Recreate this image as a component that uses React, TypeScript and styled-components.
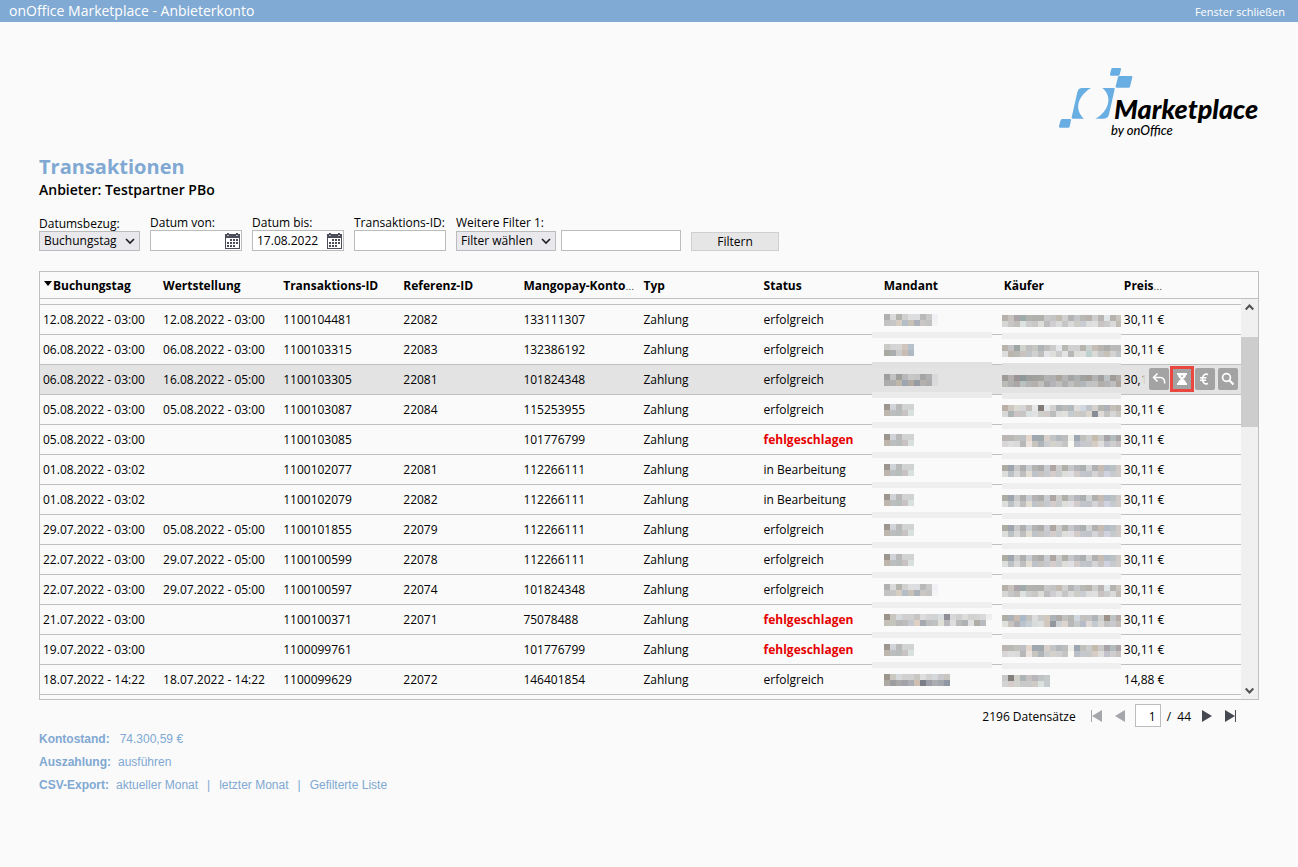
import React from 'react';
import styled, { createGlobalStyle, css } from 'styled-components';

const BLUE = '#80a8d2';
const LINE = '#c0c0c0';

const GlobalStyle = createGlobalStyle`
  *, *::before, *::after { box-sizing: border-box; }
  body {
    margin: 0;
    background: #fafafa;
    color: #000;
    font: 12px/16px "Open Sans", sans-serif;
  }
  button, input, select { font: inherit; color: inherit; margin: 0; border-radius: 0; }
`;

const TitleBar = styled.header`
  display: flex;
  align-items: center;
  justify-content: space-between;
  height: 22px;
  padding: 0 13px 0 9px;
  background: #80aad3;
  color: #fff;
  font-size: 14px;
  line-height: 20px;
`;

const CloseLink = styled.a`
  color: inherit;
  font-size: 11px;
  line-height: 20px;
  padding-top: 2px;
  text-decoration: none;
`;

const Main = styled.main`
  padding: 44px 39px 0;
`;

const LogoRow = styled.div`
  display: flex;
  justify-content: flex-end;
  height: 89px;
`;

const Logotype = styled.svg`
  margin-right: -1px;
`;

const Title = styled.h1`
  margin: 0;
  color: ${BLUE};
  font-size: 20px;
  line-height: 24px;
  font-weight: 700;
`;

const Subtitle = styled.h2`
  margin: 0 0 15px;
  font-size: 14px;
  line-height: 22px;
  font-weight: 600;
`;

const Filters = styled.form`
  display: flex;
  align-items: flex-end;
  gap: 10px;
`;

const Field = styled.div`
  display: flex;
  flex-direction: column;
`;

const FieldLabel = styled.label`
  line-height: 14px;
  white-space: nowrap;
`;

const FieldRow = styled.div`
  display: flex;
  align-items: flex-end;
  gap: 5px;
`;

const TextBox = styled.input<{ $width: number }>`
  width: ${(p) => p.$width}px;
  height: 21px;
  padding: 0 4px;
  border: 1px solid #bcbcbc;
  background: #fff;
  outline: none;
`;

const InputHolder = styled.div`
  position: relative;
  display: flex;
`;

const CalendarButton = styled.button`
  position: absolute;
  right: 2px;
  top: 3px;
  display: flex;
  padding: 0;
  border: 0;
  background: none;
`;

const SelectBox = styled.select<{ $width: number }>`
  appearance: none;
  display: block;
  width: ${(p) => p.$width}px;
  height: 20px;
  padding: 0 20px 0 4px;
  border: 1px solid #bcbcbc;
  background: #e9e9ed;
  line-height: 16px;
`;

const SelectArrow = styled.svg`
  position: absolute;
  right: 5px;
  top: 7px;
  pointer-events: none;
`;

const FilterButton = styled.button`
  width: 88px;
  height: 19px;
  padding: 0;
  border: 1px solid #cfcfcf;
  background: #e6e6e6;
  line-height: 16px;
`;

const Panel = styled.section`
  display: flex;
  margin-top: 20px;
  border: 1px solid ${LINE};
`;

const TableArea = styled.div`
  flex: 1;
  min-width: 0;
  padding-bottom: 4px;
`;

const Table = styled.table`
  width: 100%;
  table-layout: fixed;
  border-spacing: 0;
`;

const HeadCell = styled.th`
  height: 27px;
  padding: 2px 3px 0;
  border-bottom: 1px solid ${LINE};
  text-align: left;
  font-weight: 700;
  white-space: nowrap;
`;

const Dots = styled.span`
  font-weight: 300;
`;

const SortArrow = styled.svg`
  margin: 0 1px 4px 1px;
`;

const ClippedCell = styled.td`
  height: 6px;
  padding: 0;
  border-bottom: 1px solid ${LINE};
`;

const Row = styled.tr<{ $active?: boolean }>`
  background: ${(p) => (p.$active ? '#e3e3e3' : 'transparent')};
`;

const Cell = styled.td`
  position: relative;
  height: 30px;
  padding: 0 3px;
  border-bottom: 1px solid ${LINE};
  white-space: nowrap;
`;

const MaskedCell = styled(Cell)<{ $buyer?: boolean; $band?: string }>`
  padding: ${(p) => (p.$buyer ? '2px 0 0 1px' : '0 0 0 3px')};
  ${(p) => p.$band && css`
    &::after {
      content: '';
      position: absolute;
      left: ${p.$buyer ? 1 : -9}px;
      bottom: ${p.$buyer ? -5 : -4}px;
      width: ${p.$buyer ? 119 : 120}px;
      height: 6px;
      background: ${p.$band};
    }
  `}
`;

const Mosaic = styled.svg`
  display: block;
`;

const Failed = styled.strong`
  color: #e60000;
  font-weight: 700;
`;

const Actions = styled.div`
  position: absolute;
  top: 0;
  right: 0;
  display: flex;
  align-items: center;
  gap: 3px;
  height: 28px;
  padding: 0 3px 0 10px;
  background: linear-gradient(90deg, #e3e3e300, #e3e3e3 6px);
`;

const Action = styled.button<{ $marked?: boolean }>`
  display: flex;
  align-items: center;
  justify-content: center;
  width: 20px;
  height: 22px;
  padding: 0;
  border: 0;
  border-radius: 2px;
  background: #a3a3a3;
  ${(p) => p.$marked && css`
    border-radius: 0;
    box-shadow: 0 0 0 2px #eb4741, inset 0 0 0 1px #eb4741;
  `}
`;

const ScrollColumn = styled.div`
  display: flex;
  flex-direction: column;
  width: 17px;
`;

const ScrollHead = styled.div`
  height: 27px;
  border-bottom: 1px solid ${LINE};
`;

const ScrollTrack = styled.div`
  display: flex;
  flex: 1;
  flex-direction: column;
  background: #f0f0f0;
`;

const ScrollButton = styled.button`
  display: flex;
  align-items: center;
  justify-content: center;
  height: 17px;
  padding: 0;
  border: 0;
  background: none;
`;

const ScrollLane = styled.div`
  flex: 1;
  padding-top: 21px;
`;

const ScrollThumb = styled.div`
  height: 90px;
  background: #cdcdcd;
`;

const Pager = styled.nav`
  display: flex;
  align-items: center;
  justify-content: flex-end;
  height: 23px;
  margin-top: 4px;
  padding-right: 23px;
`;

const PagerCount = styled.span`
  margin: 2px 15px 0 0;
`;

const PagerButton = styled.button<{ $gap?: number }>`
  display: flex;
  padding: 0;
  border: 0;
  background: none;
  margin-right: ${(p) => p.$gap ?? 0}px;
`;

const PageBox = styled.input`
  width: 26px;
  height: 23px;
  margin-right: 6px;
  padding: 2px 4px 0;
  border: 1px solid #bcbcbc;
  background: #fff;
  text-align: right;
`;

const PagerTotal = styled.span`
  margin: 2px 11px 0 0;
`;

const Summary = styled.dl`
  margin: 1px 0 0;
  color: ${BLUE};
  font: 12px/23px "Liberation Sans", Arial, sans-serif;
`;

const SummaryRow = styled.div<{ $wide?: boolean }>`
  display: flex;
  gap: ${(p) => (p.$wide ? 10 : 7)}px;
  dt { font-weight: 700; }
  dd { display: flex; gap: 9px; margin: 0; }
`;

const SummaryLink = styled.a`
  color: inherit;
  text-decoration: none;
`;

const MANDANT: Record<string, string[]> = {
  a: [
    'b1b1b1 dadada b5b5b0 d0d0d0 dedede dbdde0 b9b9b9 c9c9c9 f1f1f5',
    'c3c3c3 c6c6c6 d6cec2 b4bec9 c8c1b7 acb1b9 cac6c4 c3c3c3 f4f4f7',
  ],
  b: ['cacac6 d4d4d4 d6d6d6 d0c6bd b5c2ce', 'a9a9a4 aaaeae cccccc c8bcb3 b0b9c1'],
  hover: [
    '9e9e9e c2c2c2 9fa09b b8b8b8 c7c7c7 c4c4c4 a4a4a4 b0b0b0 d9d9dc',
    'acacac aeaeae c0b7ab 9da6b0 b1aaa2 969ba3 b4b0ae acacac dadadd',
  ],
  c: ['9d968f d0d3d7 b9b9b9 d1d3d3 d1d2d2', 'beb6ad bcbfbf b7bcbd c9c2c2 d9e1df'],
  d: [
    '9c948a c7c7bf d6dadd d0cecf d0d0d0 c8c4c1 dcdcdc d4d4d4 d0d4d5 dadde0 8e8f96 d7d7d7 cfcfcf dcdcd8 d1d1d1 d3d3d3 d9d9d9 eeeeee',
    'c5c1b9 c5c5c0 b9b9b9 bdbdbe c5c9cf dfd0c5 a5aab0 bdbdbd c0c1c2 dfe0d7 b9b9bd dddddf bababa afb2b4 e0e0e0 b0aca6 b9bbc0 fafafa',
  ],
  e: [
    '9d968c c9c9c1 d6dadc d2d0d0 d1d1d1 cac7c3 dedede d2d2d2 d4d8da c8c8cd c8c4bf',
    'afa9a3 9c9da0 a8a8a8 a1a3a8 abafb3 cfbfb3 7c7e87 9c9fa7 abadb0 a4a6ad 9097a3',
  ],
};

const BUYER: Record<string, string[]> = {
  a: [
    'b6b2ab c8c2be aba4a8 9fabaa b2b2ae b0b0ae b0b1ad c9c9c9 c4c4c4 c1bbb2 d0d0d0 b4b4b4 c4c6c9 b8b8b4 b7b2ac cecece b8b4b4 e0e5e7 b6b2ad cbc5bf',
    'd7d7d5 c7c7c7 c2bebc dbe2e0 cdcdcd cac8c7 dcdcd9 bdbdbd d0ced2 dbdbdb c6c6c4 dadada cdcdc8 c9ccd3 dcdedd e0e0e0 c9c4c3 cbcbcb dadada c2bcb4',
  ],
  b: [
    'b8b4ab c2c2c2 9fa4a4 d0d2cc bfbfbf c6c6c2 adb3b7 bebebe cccccc e5e6ea b8b8b4 d0d0d0 d0d0d0 b7b3ae cbd0d1 c6bdb6 b8b4af adadad babab8 b9b9b9',
    'dedede bbb5ae b9b9b5 c9c3bf c2c5c7 d1d1d1 bebebe e4e4e8 dededa cccccc e4e4e4 b7b7b7 ddddd9 e0e0df bfd0d1 dadbd7 c7c7c7 c7c1ba d3d3d3 c1c5c8',
  ],
  hover: [
    '9f9b96 b4afac 9a9397 8d9999 9e9e9c a0a09c a2a29e b3b3b3 b0b0b0 aaa49c b5b5b5 a3a3a3 adb0b3 a1a19e a19c97 b2b2b2 a19e9f bcc2c4 a09c98 b2ada8',
    'bbbbb8 b0b0b0 aca7a6 bac1c1 b4b4b4 b4b0af c0c0bd a8a8a8 b6b4b9 bfbfbf aeaeac c0c0c0 b3b3af b1b5bc c0c3c2 c3c3c3 b2aeac b3b3b3 bebebe aca69f',
  ],
  c: [
    'b9b1a8 cec7c1 d8dad3 d5d5d5 c4bebd e7e7ea 837b7a e5e8e9 d2d0d0 afb2b5 bababa b4b9be dcdcda d0d7df c0c3c8 d7d1cb b5b5b1 aeb2b6 c5bfba bdb7b1',
    'd8d8d7 aeb3b5 ccc3c5 c7c6c5 d9e1e2 e1e1e1 cececb d0cbc9 bbbcbe dddddd e1e1de c3ccd1 cecac4 c8c8c8 ddd6cc 868d98 dedbd9 c3c3c2 d7d7d7 cbc7c1',
  ],
  d: [
    'bbb6b4 bab7b7 c0c0bd bcc0c4 e4d6ca 9fa8b0 a0a8ac dad0ca c3c4c6 b3b8be bdbdbd eeeeea 9da7b2 c0c0bd cccccc c5bcae c9cac8 a8a3a7 b2bcbd aaa3a5',
    'd8d6d7 dddddd dadada b8b8b8 ece3de c7c5bd b0b5bc cacccd d3d3cc d0d0d0 c5c5c5 fafaf2 bbbfc8 c5c9cd c8c8c8 d7cdc4 dededd c2c3ca cecece c7c1c1',
  ],
  e: [
    'aeada4 9fa5ac c9c9c9 aeaeae cacdd2 b5b3b2 ababac c9ccd0 ada6a3 cdcdcd b0afa8 c6c7ca b4b6bc acafb0 d1d3d5 b1b1b1 c6bcb3 b4bdc5 bac1c3 cfc9c8',
    'dddfdc bbc1c5 d8d8d8 bfbfbf e2ded3 bec3c9 c7c3c0 c6cace d4cdcc c8cccc dededa e0e0e4 d2cbc9 c3c5cd c0c4c8 d5d5d8 c9c4c4 d0d3df c6cace d1ccca',
  ],
  f: [
    'afafa8 acb1b8 c8bcb0 aabaca c2c2c0 dcdcdc cacaca d2c8bb adb3b8 adaaa7 c3c1bf b6b6b2 cfd8df c4c2bf c3c3c3 b0b4b9 cecece 9c928a bec4c6 b5aaa6',
    'dfe1dc cac3bf b0b0b5 b9c4cf c9ced3 d8dcdc dddede d0c8bc 91979c cdd0d3 ddd5ce b8b8b8 c6c9ca b5bcc8 e0dad7 c3cbd2 d9d7d4 c3c3c1 c9c9cf c4beb8',
  ],
  g: [
    'c8c8c8 817e7c ced0c8 aeb3b5 c7c2c2 b8b6ba bfc3c4 c4c9ca',
    'd3d3d3 d3ccca d0d3cf c9c9c9 cac9c9 cfcac6 dbe1de c8cbce',
  ],
};

function Pixels({ rows, width }: { rows: string[]; width?: number }) {
  const grid = rows.map((r) => r.split(' '));
  const w = width ?? grid[0].length * 6;
  return (
    <Mosaic width={w} height={12} shapeRendering="crispEdges" aria-hidden="true">
      {grid.map((line, y) =>
        line.map((c, x) => <rect key={`${x}-${y}`} x={x * 6} y={y * 6} width={6} height={6} fill={`#${c}`} />),
      )}
    </Mosaic>
  );
}

type Entry = {
  booked: string;
  valued: string;
  id: string;
  ref: string;
  account: string;
  status: string;
  mandant: string;
  buyer: string;
  price: string;
};

const entry = (
  booked: string, valued: string, id: string, ref: string, account: string,
  status: string, mandant: string, buyer: string, price = '30,11 €',
): Entry => ({ booked, valued, id, ref, account, status, mandant, buyer, price });

const ENTRIES: Entry[] = [
  entry('12.08.2022 - 03:00', '12.08.2022 - 03:00', '1100104481', '22082', '133111307', 'erfolgreich', 'a', 'a'),
  entry('06.08.2022 - 03:00', '06.08.2022 - 03:00', '1100103315', '22083', '132386192', 'erfolgreich', 'b', 'b'),
  entry('06.08.2022 - 03:00', '16.08.2022 - 05:00', '1100103305', '22081', '101824348', 'erfolgreich', 'hover', 'hover'),
  entry('05.08.2022 - 03:00', '05.08.2022 - 03:00', '1100103087', '22084', '115253955', 'erfolgreich', 'c', 'c'),
  entry('05.08.2022 - 03:00', '', '1100103085', '', '101776799', 'fehlgeschlagen', 'c', 'd'),
  entry('01.08.2022 - 03:02', '', '1100102077', '22081', '112266111', 'in Bearbeitung', 'c', 'e'),
  entry('01.08.2022 - 03:02', '', '1100102079', '22082', '112266111', 'in Bearbeitung', 'c', 'e'),
  entry('29.07.2022 - 03:00', '05.08.2022 - 05:00', '1100101855', '22079', '112266111', 'erfolgreich', 'c', 'e'),
  entry('22.07.2022 - 03:00', '29.07.2022 - 05:00', '1100100599', '22078', '112266111', 'erfolgreich', 'c', 'e'),
  entry('22.07.2022 - 03:00', '29.07.2022 - 05:00', '1100100597', '22074', '101824348', 'erfolgreich', 'a', 'a'),
  entry('21.07.2022 - 03:00', '', '1100100371', '22071', '75078488', 'fehlgeschlagen', 'd', 'f'),
  entry('19.07.2022 - 03:00', '', '1100099761', '', '101776799', 'fehlgeschlagen', 'c', 'd'),
  entry('18.07.2022 - 14:22', '18.07.2022 - 14:22', '1100099629', '22072', '146401854', 'erfolgreich', 'e', 'g', '14,88 €'),
];

const ACTIVE = 2;

const COLUMNS: { label: string; shortened?: boolean }[] = [
  { label: 'Buchungstag' },
  { label: 'Wertstellung' },
  { label: 'Transaktions-ID' },
  { label: 'Referenz-ID' },
  { label: 'Mangopay-Konto', shortened: true },
  { label: 'Typ' },
  { label: 'Status' },
  { label: 'Mandant' },
  { label: 'Käufer' },
  { label: 'Preis', shortened: true },
];

function bandFor(index: number) {
  if (index === ENTRIES.length - 1) return undefined;
  if (index === ACTIVE - 1) return '#e1e1e1';
  if (index === ACTIVE) return '#ebebeb';
  return '#efefef';
}

function Logo() {
  return (
    <Logotype width="203" height="73" viewBox="0 0 203 73" role="img" aria-label="Marketplace by onOffice">
      <g fill="#69aee2" transform="translate(-17 -66) scale(.33333)">
        <path d="M218 204h22q4 0 3 4l-4 16q-1 3-4 3h-22q-4 0-3-4l4-16q1-3 4-3Z" />
        <path d="M238 228h36q4 0 3 4l-7 28q-1 3-4 3h-36q-4 0-3-4l7-28q1-3 4-3Z" />
        <path d="M67 357h23q4 0 3 4l-4 19q-1 3-4 3H60q-4 0-3-4l5-19q1-3 5-3Z" />
        <path d="M126 264h27C119 284 98 324 132 356H98q-4 0-3-4l17-75q3-13 14-13Z" />
        <path d="M187 264h34q4 0 3 4l-17 75q-3 13-15 13h-26C204 337 221 291 187 264Z" />
      </g>
      <text x="57" y="53" fontFamily="Lato, sans-serif" fontSize="27" fontWeight="900" fontStyle="italic">Marketplace</text>
      <text x="54" y="69" fontFamily="Lato, sans-serif" fontSize="13" fontWeight="500" fontStyle="italic">by onOffice</text>
    </Logotype>
  );
}

function CalendarIcon() {
  const dots = [[6, 7], [9, 7], [12, 7], [3, 10], [6, 10], [9, 10], [12, 10], [3, 13], [6, 13], [9, 13]];
  return (
    <svg width="15" height="16" viewBox="0 0 15 16" shapeRendering="crispEdges" aria-hidden="true">
      <path d="M0 1h2V0h2v1h7V0h2v1h2v15H0Z" fill="#4b4e58" />
      <path d="M1 5h13v10H1Z" fill="#fff" />
      <path d="M2 2h2v1H2zM11 2h2v1h-2z" fill="#b9bac0" />
      {dots.map(([x, y]) => <rect key={`${x}-${y}`} x={x - 1} y={y - 1} width="2" height="2" fill="#4b4e58" />)}
    </svg>
  );
}

function Chevron() {
  return (
    <SelectArrow width="10" height="7" viewBox="0 0 10 7" aria-hidden="true">
      <path d="m1 1 4 4 4-4" fill="none" stroke="#222" strokeWidth="1.7" />
    </SelectArrow>
  );
}

function DateField({ id, label, value }: { id: string; label: string; value: string }) {
  return (
    <Field>
      <FieldLabel htmlFor={id}>{label}</FieldLabel>
      <InputHolder>
        <TextBox id={id} $width={92} defaultValue={value} />
        <CalendarButton type="button" aria-label="Kalender öffnen"><CalendarIcon /></CalendarButton>
      </InputHolder>
    </Field>
  );
}

function RowActions() {
  return (
    <Actions>
      <Action type="button" aria-label="Rückerstattung">
        <svg width="14" height="14" viewBox="0 0 14 14" fill="none" stroke="#fff" strokeWidth="1.5">
          <path d="M5.500 1.500 1.500 5.500l4 4M2 5.500h6.500c3.200 0 4.200 2 4.200 6" />
        </svg>
      </Action>
      <Action type="button" $marked aria-label="Ausstehend">
        <svg width="10" height="14" viewBox="0 0 10 14" fill="#fff">
          <path d="M0 1h10v2H9C9 5 7.500 6 6 7 7.500 8 9 9 9 11h1v2H0v-2h1C1 9 2.500 8 4 7 2.500 6 1 5 1 3H0Z" />
          <path d="M3.500 3.500h3L5 5.500Z" fill="#a3a3a3" />
        </svg>
      </Action>
      <Action type="button" aria-label="Auszahlung">
        <svg width="12" height="14" viewBox="0 0 12 14" fill="none" stroke="#fff" strokeWidth="1.6">
          <path d="M9 2.500C6 1.300 3.500 3 3.500 7s2.500 5.700 5.500 4.500M1 5.700h6.500M1 8.300h6" />
        </svg>
      </Action>
      <Action type="button" aria-label="Details">
        <svg width="14" height="14" viewBox="0 0 14 14" fill="none" stroke="#fff">
          <circle cx="5.500" cy="5.500" r="3.900" strokeWidth="1.700" />
          <path d="m8.300 8.300 4.200 4.200" strokeWidth="2.200" />
        </svg>
      </Action>
    </Actions>
  );
}

function PagerIcon({ dir, bar, dim }: { dir: 'prev' | 'next'; bar?: boolean; dim?: boolean }) {
  return (
    <svg width="11" height="12" viewBox="0 0 11 12" fill={dim ? '#a5a6ab' : '#464852'} aria-hidden="true">
      {dir === 'prev' ? <path d="M11 0v12L1 6Z" /> : <path d="M0 0v12l10-6Z" />}
      {bar && <rect x={dir === 'prev' ? 0 : 10} y="0" width="1" height="12" />}
    </svg>
  );
}

export default function App() {
  return (
    <>
      <GlobalStyle />
      <TitleBar>
        <span>onOffice Marketplace - Anbieterkonto</span>
        <CloseLink href="#">Fenster schließen</CloseLink>
      </TitleBar>
      <Main>
        <LogoRow><Logo /></LogoRow>
        <Title>Transaktionen</Title>
        <Subtitle>Anbieter: Testpartner PBo</Subtitle>

        <Filters onSubmit={(e) => e.preventDefault()}>
          <Field>
            <FieldLabel htmlFor="date-kind">Datumsbezug:</FieldLabel>
            <InputHolder>
              <SelectBox id="date-kind" $width={101}><option>Buchungstag</option></SelectBox>
              <Chevron />
            </InputHolder>
          </Field>
          <DateField id="from" label="Datum von:" value="" />
          <DateField id="to" label="Datum bis:" value="17.08.2022" />
          <Field>
            <FieldLabel htmlFor="tid">Transaktions-ID:</FieldLabel>
            <TextBox id="tid" $width={92} />
          </Field>
          <Field>
            <FieldLabel htmlFor="more">Weitere Filter 1:</FieldLabel>
            <FieldRow>
              <InputHolder>
                <SelectBox id="more" $width={100}><option>Filter wählen</option></SelectBox>
                <Chevron />
              </InputHolder>
              <TextBox $width={120} aria-label="Filterwert" />
            </FieldRow>
          </Field>
          <FilterButton type="submit">Filtern</FilterButton>
        </Filters>

        <Panel>
          <TableArea>
            <Table>
              <thead>
                <tr>
                  {COLUMNS.map((c, i) => (
                    <HeadCell key={c.label} scope="col">
                      {i === 0 && (
                        <SortArrow width="8" height="5" viewBox="0 0 8 5" aria-hidden="true"><path d="M0 0h8L4 5Z" /></SortArrow>
                      )}
                      {c.label}
                      {c.shortened && <Dots>…</Dots>}
                    </HeadCell>
                  ))}
                </tr>
              </thead>
              <tbody>
                <tr aria-hidden="true"><ClippedCell colSpan={10} /></tr>
                {ENTRIES.map((e, i) => (
                  <Row key={e.id} $active={i === ACTIVE}>
                    <Cell>{e.booked}</Cell>
                    <Cell>{e.valued}</Cell>
                    <Cell>{e.id}</Cell>
                    <Cell>{e.ref}</Cell>
                    <Cell>{e.account}</Cell>
                    <Cell>Zahlung</Cell>
                    <Cell>{e.status === 'fehlgeschlagen' ? <Failed>{e.status}</Failed> : e.status}</Cell>
                    <MaskedCell $band={bandFor(i)}><Pixels rows={MANDANT[e.mandant]} /></MaskedCell>
                    <MaskedCell $buyer $band={bandFor(i)}>
                      <Pixels rows={BUYER[e.buyer]} width={e.buyer === 'g' ? undefined : 119} />
                    </MaskedCell>
                    <Cell>
                      {e.price}
                      {i === ACTIVE && <RowActions />}
                    </Cell>
                  </Row>
                ))}
              </tbody>
            </Table>
          </TableArea>
          <ScrollColumn>
            <ScrollHead />
            <ScrollTrack>
              <ScrollButton type="button" aria-label="Nach oben">
                <svg width="9" height="7" viewBox="0 0 9 7"><path d="m.7 5.500 3.800-4 3.800 4" fill="none" stroke="#505050" strokeWidth="2" /></svg>
              </ScrollButton>
              <ScrollLane><ScrollThumb /></ScrollLane>
              <ScrollButton type="button" aria-label="Nach unten">
                <svg width="9" height="7" viewBox="0 0 9 7"><path d="m.7 1.500 3.800 4 3.800-4" fill="none" stroke="#505050" strokeWidth="2" /></svg>
              </ScrollButton>
            </ScrollTrack>
          </ScrollColumn>
        </Panel>

        <Pager aria-label="Seiten">
          <PagerCount>2196 Datensätze</PagerCount>
          <PagerButton type="button" $gap={12} aria-label="Erste Seite"><PagerIcon dir="prev" bar dim /></PagerButton>
          <PagerButton type="button" $gap={10} aria-label="Vorherige Seite"><PagerIcon dir="prev" dim /></PagerButton>
          <PageBox aria-label="Seite" defaultValue="1" />
          <PagerTotal>/&nbsp; 44</PagerTotal>
          <PagerButton type="button" $gap={12} aria-label="Nächste Seite"><PagerIcon dir="next" /></PagerButton>
          <PagerButton type="button" aria-label="Letzte Seite"><PagerIcon dir="next" bar /></PagerButton>
        </Pager>

        <Summary>
          <SummaryRow $wide>
            <dt>Kontostand:</dt>
            <dd>74.300,59 €</dd>
          </SummaryRow>
          <SummaryRow>
            <dt>Auszahlung:</dt>
            <dd><SummaryLink href="#">ausführen</SummaryLink></dd>
          </SummaryRow>
          <SummaryRow>
            <dt>CSV-Export:</dt>
            <dd>
              <SummaryLink href="#">aktueller Monat</SummaryLink>
              <span>|</span>
              <SummaryLink href="#">letzter Monat</SummaryLink>
              <span>|</span>
              <SummaryLink href="#">Gefilterte Liste</SummaryLink>
            </dd>
          </SummaryRow>
        </Summary>
      </Main>
    </>
  );
}
